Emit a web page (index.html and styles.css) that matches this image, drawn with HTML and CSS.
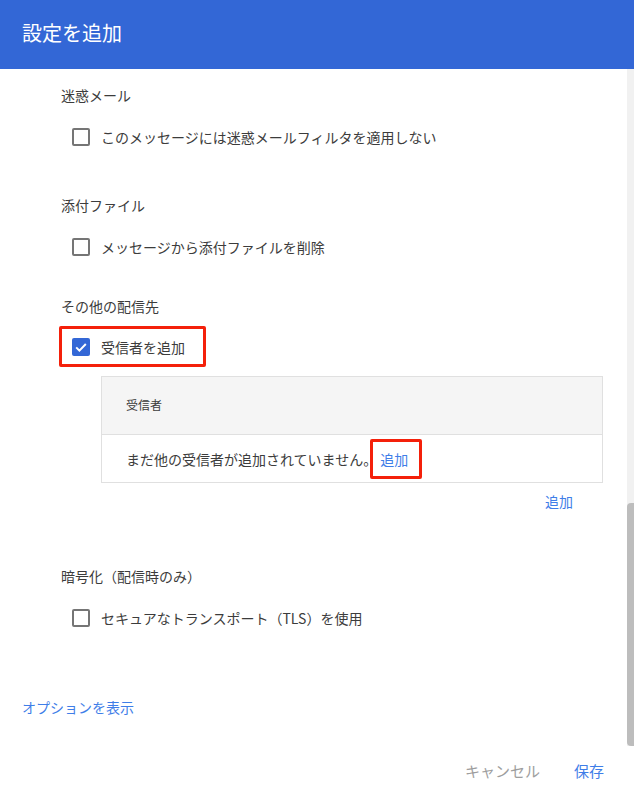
FILE: index.html
```html
<!DOCTYPE html>
<html lang="ja">
<head>
<meta charset="utf-8">
<link rel="stylesheet" href="styles.css">
</head>
<body>
<div class="dialog">
  <header class="head">設定を追加</header>
  <div class="middle">
    <div class="content">
      <section class="sec sec-first">
        <div class="label">迷惑メール</div>
        <div class="row"><span class="cb"></span><span>このメッセージには迷惑メールフィルタを適用しない</span></div>
      </section>
      <section class="sec sec-attach">
        <div class="label">添付ファイル</div>
        <div class="row"><span class="cb"></span><span>メッセージから添付ファイルを削除</span></div>
      </section>
      <section class="sec sec-other">
        <div class="label">その他の配信先</div>
        <div class="row row-mark"><span class="cb cb-on"><svg viewBox="0 0 18 18" width="18" height="18"><path d="M4.2 9.4 L7.4 12.6 L13.8 6" fill="none" stroke="#fff" stroke-width="2"/></svg></span><span>受信者を追加</span></div>
        <div class="table">
          <div class="thead">受信者</div>
          <div class="tbody">まだ他の受信者が追加されていません。<a class="link mark-link">追加</a></div>
        </div>
        <div class="addrow"><a class="link">追加</a></div>
      </section>
      <section class="sec sec-enc">
        <div class="label">暗号化（配信時のみ）</div>
        <div class="row"><span class="cb"></span><span>セキュアなトランスポート（TLS）を使用</span></div>
      </section>
      <div class="options"><a class="link">オプションを表示</a></div>
    </div>
    <div class="scroll"><div class="thumb"></div></div>
  </div>
  <footer class="foot">
    <a class="btn btn-cancel">キャンセル</a>
    <a class="btn btn-save">保存</a>
  </footer>
</div>
</body>
</html>
```
FILE: styles.css
```css
html, body {
  margin: 0;
  padding: 0;
  background: #fff;
}
body {
  font-family: "Noto Sans CJK JP", "Noto Sans", sans-serif;
  color: #3c3c3c;
  font-size: 14px;
  line-height: 20px;
}
.dialog {
  width: 634px;
  height: 797px;
  display: flex;
  flex-direction: column;
}
.head {
  height: 69px;
  box-sizing: border-box;
  background: #3367d6;
  color: #fff;
  font-size: 20px;
  line-height: 28px;
  padding: 19px 0 0 22px;
}
.middle {
  height: 677px;
  display: flex;
}
.content {
  flex: 1;
}
.scroll {
  width: 7px;
  background: #f1f1f1;
  display: flex;
  flex-direction: column;
  justify-content: flex-end;
}
.thumb {
  height: 243px;
  background: #bdbdbd;
  border-radius: 4px 0 0 4px;
}
.sec {
  padding-left: 61px;
}
.sec-first { padding-top: 16px; }
.sec-attach { padding-top: 49px; }
.sec-other { padding-top: 40px; }
.sec-enc { padding-top: 55px; }
.label {
  height: 20px;
}
.row {
  display: flex;
  align-items: center;
  gap: 11px;
  height: 18px;
  margin-top: 23px;
  padding-left: 11px;
}
.cb {
  width: 18px;
  height: 18px;
  box-sizing: border-box;
  border: 2px solid #757575;
  border-radius: 2px;
  flex: none;
}
.cb-on {
  border: none;
  background: #3367d6;
  display: flex;
}
.row.row-mark {
  display: inline-flex;
  height: 20px;
  margin: 10px 0 0 -2px;
  border: 3px solid #f4200a;
  border-radius: 2px;
  padding: 8px 18px 7px 10px;
}
.table {
  margin: 9px 24px 0 40px;
  border: 1px solid #e0e0e0;
}
.thead {
  height: 58px;
  box-sizing: border-box;
  background: #f5f5f5;
  border-bottom: 1px solid #e0e0e0;
  font-size: 12px;
  line-height: 18px;
  padding: 19px 0 0 24px;
}
.tbody {
  height: 47px;
  display: flex;
  align-items: center;
  padding-left: 24px;
}
.link {
  color: #3f7ee8;
  cursor: pointer;
}
.mark-link {
  display: inline-block;
  margin-left: -7px;
  padding: 7px 11px 7px 7px;
  border: 3px solid #f4200a;
  border-radius: 2px;
}
.addrow {
  display: flex;
  justify-content: flex-end;
  margin-top: 8px;
  padding-right: 54px;
}
.options {
  margin-top: 70px;
  padding-left: 22px;
}
.foot {
  flex: 1;
  display: flex;
  justify-content: flex-end;
  align-items: center;
  gap: 34px;
  padding-right: 30px;
  font-size: 15px;
  padding-bottom: 1px;
}
.btn-cancel { color: #9e9e9e; }
.btn-save { color: #3f7ee8; }
```
